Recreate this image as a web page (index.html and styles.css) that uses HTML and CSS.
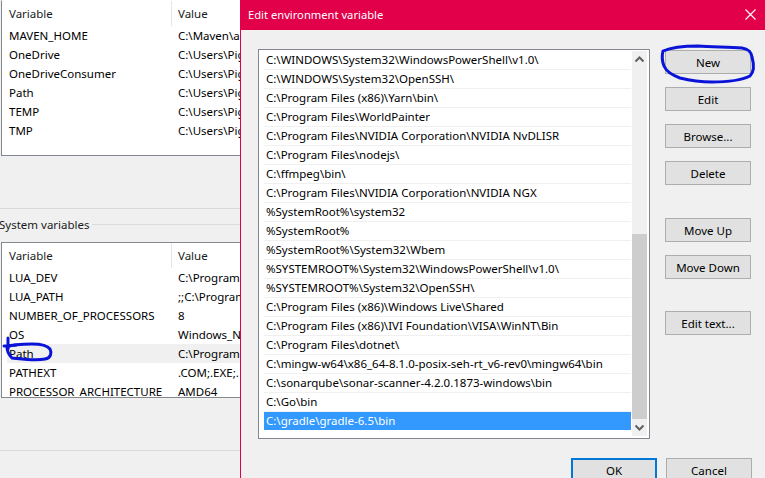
FILE: index.html
```html
<!DOCTYPE html>
<html lang="en">
<head>
    <meta charset="UTF-8">
    <meta name="viewport" content="width=device-width, initial-scale=1.0">
    <title>Edit environment variable</title>
    <link rel="stylesheet" href="styles.css">
</head>
<body>

    <div class="back">
        <div class="panel panel-user">
            <div class="row head"><span class="col-name">Variable</span><span class="col-value">Value</span></div>
            <div class="row"><span class="col-name">MAVEN_HOME</span><span class="col-value">C:\Maven\a</span></div>
            <div class="row"><span class="col-name">OneDrive</span><span class="col-value">C:\Users\Pig</span></div>
            <div class="row"><span class="col-name">OneDriveConsumer</span><span class="col-value">C:\Users\Pig</span></div>
            <div class="row"><span class="col-name">Path</span><span class="col-value">C:\Users\Pig</span></div>
            <div class="row"><span class="col-name">TEMP</span><span class="col-value">C:\Users\Pig</span></div>
            <div class="row"><span class="col-name">TMP</span><span class="col-value">C:\Users\Pig</span></div>
        </div>

        <div class="group-line"></div>
        <div class="group-label"><span>System variables</span></div>

        <div class="panel panel-system">
            <div class="row head"><span class="col-name">Variable</span><span class="col-value">Value</span></div>
            <div class="row"><span class="col-name">LUA_DEV</span><span class="col-value">C:\Program</span></div>
            <div class="row"><span class="col-name">LUA_PATH</span><span class="col-value">;;C:\Program</span></div>
            <div class="row"><span class="col-name">NUMBER_OF_PROCESSORS</span><span class="col-value">8</span></div>
            <div class="row"><span class="col-name">OS</span><span class="col-value">Windows_N</span></div>
            <div class="row picked"><span class="col-name">Path</span><span class="col-value">C:\Program</span></div>
            <div class="row"><span class="col-name">PATHEXT</span><span class="col-value">.COM;.EXE;.</span></div>
            <div class="row"><span class="col-name">PROCESSOR_ARCHITECTURE</span><span class="col-value">AMD64</span></div>
        </div>

        <div class="group-line bottom-line"></div>
    </div>

    <div class="dialog">
        <div class="titlebar">
            <span>Edit environment variable</span>
            <svg class="close" width="11" height="11" viewBox="0 0 11 11"><path d="M0.5 0.5L10.5 10.5M10.5 0.5L0.5 10.5" stroke="#fff" stroke-width="1.1" fill="none"/></svg>
        </div>

        <div class="dialog-body">
            <div class="listbox">
                <div class="items">
                    <div class="item">C:\WINDOWS\System32\WindowsPowerShell\v1.0\</div>
                    <div class="item">C:\WINDOWS\System32\OpenSSH\</div>
                    <div class="item">C:\Program Files (x86)\Yarn\bin\</div>
                    <div class="item">C:\Program Files\WorldPainter</div>
                    <div class="item">C:\Program Files\NVIDIA Corporation\NVIDIA NvDLISR</div>
                    <div class="item">C:\Program Files\nodejs\</div>
                    <div class="item">C:\ffmpeg\bin\</div>
                    <div class="item">C:\Program Files\NVIDIA Corporation\NVIDIA NGX</div>
                    <div class="item">%SystemRoot%\system32</div>
                    <div class="item">%SystemRoot%</div>
                    <div class="item">%SystemRoot%\System32\Wbem</div>
                    <div class="item">%SYSTEMROOT%\System32\WindowsPowerShell\v1.0\</div>
                    <div class="item">%SYSTEMROOT%\System32\OpenSSH\</div>
                    <div class="item">C:\Program Files (x86)\Windows Live\Shared</div>
                    <div class="item">C:\Program Files (x86)\IVI Foundation\VISA\WinNT\Bin</div>
                    <div class="item">C:\Program Files\dotnet\</div>
                    <div class="item">C:\mingw-w64\x86_64-8.1.0-posix-seh-rt_v6-rev0\mingw64\bin</div>
                    <div class="item">C:\sonarqube\sonar-scanner-4.2.0.1873-windows\bin</div>
                    <div class="item">C:\Go\bin</div>
                    <div class="item selected">C:\gradle\gradle-6.5\bin</div>
                </div>
                <div class="scrollbar">
                    <svg class="arrow" width="15" height="17" viewBox="0 0 15 17"><path d="M3.5 10.5L7.5 6.5L11.5 10.5" stroke="#606060" stroke-width="2" fill="none"/></svg>
                    <div class="track"><div class="thumb"></div></div>
                    <svg class="arrow" width="15" height="17" viewBox="0 0 15 17"><path d="M3.5 6.5L7.5 10.5L11.5 6.5" stroke="#606060" stroke-width="2" fill="none"/></svg>
                </div>
            </div>

            <div class="buttons">
                <button class="btn">New</button>
                <button class="btn">Edit</button>
                <button class="btn">Browse...</button>
                <button class="btn">Delete</button>
                <button class="btn gap-above">Move Up</button>
                <button class="btn">Move Down</button>
                <button class="btn gap-above-big">Edit text...</button>
            </div>
        </div>

        <div class="dialog-foot">
            <button class="btn btn-ok">OK</button>
            <button class="btn">Cancel</button>
        </div>
    </div>

    <!-- pen marks drawn over the screenshot -->
    <svg class="marks" width="765" height="478" viewBox="0 0 765 478">
        <path d="M663 51C672 47 686 46 698 46C712 47 728 47 742 48C748 49 751 51 752 57C754 64 754 72 750 76C742 80 728 82 712 82C700 82 688 80 680 78C672 75 666 71 664 66C662 61 662 55 663 51Z" />
        <path d="M7 347C14 344 24 344 32 344C40 344 47 345 50 349C52 353 51 358 45 359C36 361 22 359 12 358C9 355 7 351 7 347Z" />
        <path d="M8 338L8 349M4 346L16 345" />
    </svg>

</body>
</html>
```

FILE: styles.css
```css
html, body {
    margin: 0;
    padding: 0;
    height: 100%;
    overflow: hidden;
}

body {
    font-family: "Noto Sans", "Open Sans", sans-serif;
    font-size: 11.5px;
    color: #000;
    background-color: #f0f0f0;
}

.back {
    width: 240px;
    height: 478px;
    overflow: hidden;
    padding-left: 1px;
    box-sizing: border-box;
}

.panel {
    box-sizing: border-box;
    width: 320px;
    background-color: #fff;
    border: 1px solid #828790;
    overflow: hidden;
}

.panel-user {
    height: 156px;
    border-top-color: #fff;
}

.panel-system {
    height: 156px;
}

.row {
    display: flex;
    height: 19px;
    line-height: 19px;
    margin-left: 5px;
    white-space: nowrap;
}

.row.head {
    height: 25px;
    line-height: 25px;
    color: #1a1a1a;
}

.row.picked {
    background-color: #f0f0f0;
}

.col-name {
    width: 171px;
    padding-left: 2px;
    box-sizing: border-box;
    flex-shrink: 0;
}

.head .col-value {
    border-left: 1px solid #e5e5e5;
    padding-left: 6px;
    margin-left: -7px;
}

.group-line {
    height: 1px;
    background-color: #d9d9d9;
    margin: 52px 0 0 -1px;
}

.group-label {
    display: flex;
    align-items: center;
    gap: 2px;
    height: 19px;
    margin: 6px 0 8px -2px;
    white-space: nowrap;
    color: #1a1a1a;
}

.group-label::after {
    content: "";
    flex: 1;
    height: 1px;
    background-color: #dcdcdc;
}

.bottom-line {
    margin-top: 52px;
}

.dialog {
    position: absolute;
    left: 240px;
    top: 0;
    width: 525px;
    height: 478px;
    overflow: hidden;
    box-sizing: border-box;
    background-color: #f0f0f0;
    border-left: 1px solid #e3004b;
}

.titlebar {
    display: flex;
    align-items: center;
    justify-content: space-between;
    box-sizing: border-box;
    height: 30px;
    padding: 0 9px 2px 7px;
    font-size: 11.2px;
    background-color: #e3004b;
    color: #fff;
}

.dialog-body {
    display: flex;
    padding: 19px 0 0 17px;
}

.listbox {
    display: flex;
    box-sizing: border-box;
    width: 392px;
    height: 390px;
    background-color: #fff;
    border: 1px solid #828790;
}

.items {
    box-sizing: border-box;
    width: 372px;
    margin-right: 1px;
    padding: 1px 0 0 5px;
}

.item {
    box-sizing: border-box;
    height: 19px;
    line-height: 18px;
    padding-left: 2px;
    border-bottom: 1px solid #f0f0f0;
    white-space: nowrap;
    overflow: hidden;
}

.item.selected {
    height: 18px;
    background-color: #3399ff;
    border-bottom: none;
    color: #fff;
}

.scrollbar {
    display: flex;
    flex-direction: column;
    width: 15px;
    height: 385px;
    margin-top: 1px;
    background-color: #f0f0f0;
}

.arrow {
    flex-shrink: 0;
}

.track {
    flex: 1;
    display: flex;
    flex-direction: column;
    justify-content: flex-end;
}

.thumb {
    height: 185px;
    background-color: #cdcdcd;
}

.buttons {
    display: flex;
    flex-direction: column;
    gap: 13px;
    margin-left: 15px;
    padding-top: 1px;
}

.btn {
    box-sizing: border-box;
    width: 86px;
    height: 24px;
    padding: 0;
    font-family: inherit;
    font-size: 11.5px;
    color: #000;
    background-color: #e1e1e1;
    border: 1px solid #adadad;
}

.gap-above {
    margin-top: 20px;
}

.gap-above-big {
    margin-top: 19px;
}

.dialog-foot {
    display: flex;
    justify-content: flex-end;
    gap: 9px;
    padding: 19px 13px 0 0;
}

.btn-ok {
    border: 2px solid #0078d7;
}

.marks {
    position: absolute;
    left: 0;
    top: 0;
    pointer-events: none;
}

.marks path {
    fill: none;
    stroke: #0a14d8;
    stroke-width: 3;
    stroke-linecap: round;
}
```
